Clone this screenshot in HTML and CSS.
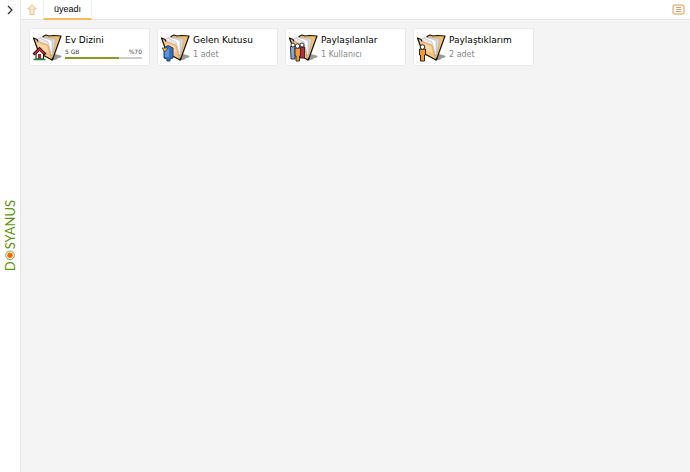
FILE: index.html
```html
<!DOCTYPE html>
<html lang="tr">
<head>
    <meta charset="UTF-8">
    <meta name="viewport" content="width=device-width, initial-scale=1.0">
    <title>Dosyanus</title>
    <link rel="stylesheet" href="styles.css">
</head>
<body>
    <svg class="defs" aria-hidden="true">
        <symbol id="folder" viewBox="0 0 30 30">
            <path d="M19 28 L23 21 L30 23 L28 25 L25 25 L26 26 Z" fill="#999"/>
            <path d="M11 3.500 L14 2 L17 3 L21 2.500 L29 3 L20.500 26.500 L17 25 Z" fill="#f8c067" stroke="#111" stroke-width="1.200" stroke-linejoin="round"/>
            <path d="M12 4 L24 6 L20.500 23 L16 20 Z" fill="#d8d8dc" stroke="#999" stroke-width=".4"/>
            <path d="M8 4.500 L10 4 L20 7.500 L20 22 L17 20 Z" fill="#fff" stroke="#999" stroke-width=".4"/>
            <path d="M5 6 L8 5 L16 9 L19 20 L14 17 Z" fill="#e9e9ee" stroke="#999" stroke-width=".4"/>
            <path d="M1.500 5 L5 6.500 L6 9 L16 12 L20 27 L6 20 Z" fill="#fcc17a"/>
            <path d="M5 10 L15 13 L17 20 L7 17 Z" fill="#ffd6a0"/>
            <path d="M6 8.500 L16 12 L19.500 26" fill="none" stroke="#b98040" stroke-width=".5"/>
            <path d="M6 8.500 L5 6.500 L1.500 5 L7 20 L20 27 L21 25" fill="none" stroke="#111" stroke-width="1.200" stroke-linejoin="round"/>
        </symbol>
    </svg>

    <aside class="sidebar">
        <button class="expand" aria-label="Menüyü aç">
            <svg width="8" height="10" viewBox="0 0 8 10"><path d="M2 1 L6 5 L2 9" fill="none" stroke="#333" stroke-width="1.300"/></svg>
        </button>
        <div class="logo">D<svg width="10" height="10" viewBox="0 0 10 10"><circle cx="5" cy="5" r="4.300" fill="#fff" stroke="#7fa63c" stroke-width="1"/><circle cx="5" cy="5" r="2.800" fill="#ff6a00"/></svg>SYANUS</div>
    </aside>

    <main class="main">
        <header class="topbar">
            <button class="up" aria-label="Üst dizin">
                <svg width="10" height="11" viewBox="0 0 10 11"><path d="M5 .7 L9.300 5 H7 V10.400 H3 V5 H.7 Z" fill="#ffe6c2" stroke="#e3c3a0"/></svg>
            </button>
            <a class="tab" href="#">üyeadı</a>
            <button class="menu" aria-label="Menü">
                <svg width="13" height="11" viewBox="0 0 13 11"><rect x="1" y="1" width="11" height="9" rx="2" fill="#fffaf3" stroke="#e6bd90" stroke-width="1.500"/><path d="M4 3.500 H9 M4 5.500 H9 M4 7.500 H9" stroke="#d7a571"/></svg>
            </button>
        </header>

        <div class="cards">
            <a class="card" href="#">
                <svg class="icon" viewBox="0 0 30 30">
                    <use href="#folder"/>
                    <path d="M4 21 V26 H11.500 V21 L7.500 17 Z" fill="#fff" stroke="#111"/>
                    <path d="M1.500 21.500 L7.500 15.500 L13.500 21.500" fill="none" stroke="#111" stroke-width="2.600"/>
                    <path d="M2.500 21 L7.500 16 L12.500 21" fill="none" stroke="#f01c2e" stroke-width="1.500"/>
                    <rect x="6" y="21" width="3" height="5" fill="#b52020"/>
                    <path d="M1.500 26.500 H13.500" stroke="#168a32" stroke-width="1.500"/>
                </svg>
                <div class="info">
                    <div class="name">Ev Dizini</div>
                    <div class="quota"><span>5 GB</span><span>%70</span></div>
                    <div class="bar"><div class="used" style="width: 70%"></div></div>
                </div>
            </a>
            <a class="card" href="#">
                <svg class="icon" viewBox="0 0 30 30">
                    <use href="#folder"/>
                    <path d="M4 15 L8 12.500 L13 15 V25 L10 26 V28 H7 V26 L4 25 Z" fill="#3470bf" stroke="#1c4177"/>
                    <path d="M5 16 L8 14 L9 17 V24 L5 24 Z" fill="#5b96dd"/>
                    <path d="M2 15 L8 15 L5 19 Z" fill="#f5b83d" stroke="#334" stroke-width=".7"/>
                </svg>
                <div class="info">
                    <div class="name">Gelen Kutusu</div>
                    <div class="detail">1 adet</div>
                </div>
            </a>
            <a class="card" href="#">
                <svg class="icon" viewBox="0 0 30 30">
                    <use href="#folder"/>
                    <g stroke="#222" stroke-width=".9">
                        <path d="M2.500 13.500 H7 V26 H3 Z" fill="#8ba7dc"/>
                        <circle cx="5" cy="12" r="2" fill="#fff"/>
                        <path d="M12 14 H16.500 V25 H12 Z" fill="#b82c45"/>
                        <circle cx="14" cy="12" r="2" fill="#fff"/>
                        <path d="M7 15 H12.500 V23 H11.500 V28 H8 V23 H7 Z" fill="#f79a31"/>
                        <circle cx="9.500" cy="13" r="2.200" fill="#fff"/>
                    </g>
                </svg>
                <div class="info">
                    <div class="name">Paylaşılanlar</div>
                    <div class="detail">1 Kullanıcı</div>
                </div>
            </a>
            <a class="card" href="#">
                <svg class="icon" viewBox="0 0 30 30">
                    <use href="#folder"/>
                    <g stroke="#222">
                        <path d="M3.500 16 H9.500 V22 H8.500 V28 H4.500 V22 H3.500 Z" fill="#f79a31"/>
                        <circle cx="6.500" cy="14" r="2.300" fill="#fff"/>
                    </g>
                </svg>
                <div class="info">
                    <div class="name">Paylaştıklarım</div>
                    <div class="detail">2 adet</div>
                </div>
            </a>
        </div>
    </main>
</body>
</html>
```
FILE: styles.css
```css
* {
    box-sizing: border-box;
}
body {
    margin: 0;
    min-height: 100vh;
    display: flex;
    font-family: "DejaVu Sans", sans-serif;
    font-size: 9px;
    background-color: #f4f4f4;
    color: #000;
}
a {
    color: inherit;
    text-decoration: none;
}
button {
    display: flex;
    align-items: center;
    justify-content: center;
    padding: 0;
    border: none;
    background: none;
    cursor: pointer;
}
svg {
    display: block;
}
.defs {
    display: none;
}
.sidebar {
    width: 21px;
    flex-shrink: 0;
    display: flex;
    flex-direction: column;
    align-items: center;
    justify-content: space-between;
    background-color: #fff;
    border-right: 1px solid #e6e6e6;
}
.sidebar::after {
    content: "";
    height: 20px;
}
.expand {
    width: 20px;
    height: 20px;
}
.logo {
    display: flex;
    align-items: center;
    gap: 1px;
    writing-mode: vertical-rl;
    transform: rotate(180deg);
    font-family: "Lato", sans-serif;
    font-size: 13px;
    line-height: 18px;
    color: #5f9410;
}
.main {
    flex: 1;
}
.topbar {
    display: flex;
    height: 20px;
    background-color: #fff;
    border-bottom: 1px solid #e6e6e6;
}
.up {
    width: 22px;
}
.tab {
    height: 20px;
    padding: 0 10px;
    font-family: "Liberation Sans", sans-serif;
    line-height: 18px;
    border: 1px solid #eee;
    border-width: 0 1px;
    border-bottom: 2px solid #f5b95f;
}
.menu {
    width: 23px;
    margin-left: auto;
}
.cards {
    display: flex;
    flex-wrap: wrap;
    gap: 7px;
    padding: 8px;
}
.card {
    display: flex;
    gap: 3px;
    width: 121px;
    height: 38px;
    padding: 4px 7px 4px 2px;
    background-color: #fff;
    border: 1px solid #eaeaea;
    border-radius: 2px;
}
.icon {
    width: 30px;
    height: 30px;
    flex-shrink: 0;
}
.info {
    flex: 1;
    white-space: nowrap;
}
.name {
    line-height: 15px;
}
.detail {
    line-height: 13px;
    font-size: 8px;
    color: #888;
}
.quota {
    display: flex;
    justify-content: space-between;
    font-size: 6px;
    line-height: 8px;
    color: #444;
}
.bar {
    height: 2px;
    margin-top: 1px;
    background-color: #ccc;
}
.used {
    height: 2px;
    background-color: #8a9a22;
}
```
